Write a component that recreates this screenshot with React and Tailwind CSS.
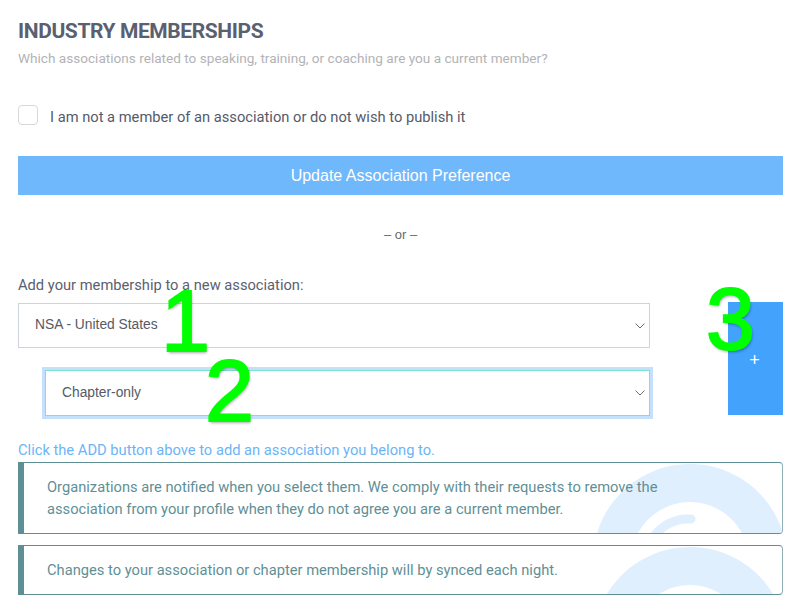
import React from 'react';

const Chevron = () => (
  <svg width="10" height="6" viewBox="0 0 10 6" className="mr-[4px]">
    <path d="M0.5 0.5 L5 5 L9.5 0.5" fill="none" stroke="#6b6f7a" strokeWidth="1" />
  </svg>
);

const Watermark = () => (
  <svg
    width="194"
    height="194"
    viewBox="0 0 194 194"
    className="absolute left-[569px] top-[1px] pointer-events-none"
  >
    <path
      d="M97 0 A97 97 0 1 1 96.99 0 Z M97 38 A59 59 0 1 0 97.01 38 Z"
      fill="#dfeffd"
      fillRule="evenodd"
    />
    <path d="M98 55 A42 42 0 0 0 60 120" fill="none" stroke="#dfeffd" strokeWidth="9" strokeLinecap="round" />
  </svg>
);

const Callout = ({ children, className = '' }) => (
  <div
    className={`relative overflow-hidden border border-[#5e8f95] border-r-[#8fb0b4] border-l-[6px] rounded-r-[4px] pl-[23px] pr-4 py-[13px] ${className}`}
  >
    <Watermark />
    <p className="relative text-[14.7px] leading-[22px] text-[#5f8f96]">{children}</p>
  </div>
);

const Mark = ({ children, className }) => (
  <span
    className={`absolute font-['Liberation_Sans',Arial,sans-serif] font-normal text-[88px] leading-none text-[#00ff00] [-webkit-text-stroke:2px_#00ff00] [text-shadow:1px_2px_3px_rgba(0,0,0,0.35)] pointer-events-none ${className}`}
  >
    {children}
  </span>
);

export default function App() {
  return (
    <div className="relative w-[800px] h-[615px] overflow-hidden bg-white font-['Roboto',sans-serif] px-[18px] pr-[17px] pt-[17px]">
      <h1 className="text-[21px] leading-[28px] font-bold tracking-[-0.4px] text-[#5b6070] uppercase">Industry Memberships</h1>
      <p className="mt-[3px] text-[13.6px] leading-[20px] text-[#b3b3b6]">
        Which associations related to speaking, training, or coaching are you a current member?
      </p>

      <label className="mt-[37px] flex items-center h-[20px]">
        <span className="w-[20px] h-[20px] rounded-[4px] border border-[#d6d8dc] bg-white" />
        <span className="ml-[12px] text-[14.7px] text-[#555a6a] mt-[5px]">
          I am not a member of an association or do not wish to publish it
        </span>
      </label>

      <button className="mt-[31px] w-full h-[39px] bg-[#70b8fc] text-white text-[16px] font-['Liberation_Sans',Arial,sans-serif]">
        Update Association Preference
      </button>

      <div className="mt-[30px] text-center text-[13px] leading-[20px] text-[#666a70] font-['Liberation_Sans',Arial,sans-serif]">
        – or –
      </div>

      <div className="mt-[30px] text-[14.7px] leading-[20px] text-[#5b6070]">Add your membership to a new association:</div>

      <div className="mt-[7px] flex items-start">
        <div className="w-[632px] pt-[1px]">
          <div className="h-[45px] flex items-center justify-between border border-[#cfd3da] bg-white pl-[16px] font-['Liberation_Sans',Arial,sans-serif] text-[13.8px] text-[#555a66]">
            <span>NSA - United States</span>
            <Chevron />
          </div>
          <div className="mt-[22px] ml-[27px] h-[46px] flex items-center justify-between border border-[#7fe0d0] ring-[3px] ring-[#c5e0fb] bg-white pl-[16px] font-['Liberation_Sans',Arial,sans-serif] text-[13.8px] text-[#555a66]">
            <span>Chapter-only</span>
            <Chevron />
          </div>
        </div>
        <button className="ml-auto w-[55px] h-[113px] bg-[#42a2fc] text-white text-[18px] leading-none flex items-center justify-center pt-[2px] pr-[2px] font-['Liberation_Sans',Arial,sans-serif]">
          +
        </button>
      </div>

      <p className="mt-[24px] text-[14.7px] leading-[20px] text-[#6bb5f7]">
        Click the ADD button above to add an association you belong to.
      </p>

      <Callout className="mt-[2px]">
        Organizations are notified when you select them. We comply with their requests to remove the
        <br />
        association from your profile when they do not agree you are a current member.
      </Callout>

      <Callout className="mt-[11px]">Changes to your association or chapter membership will by synced each night.</Callout>

      <Mark className="left-[161px] top-[277px]">1</Mark>
      <Mark className="left-[205px] top-[347px]">2</Mark>
      <Mark className="left-[706px] top-[275px]">3</Mark>
    </div>
  );
}
